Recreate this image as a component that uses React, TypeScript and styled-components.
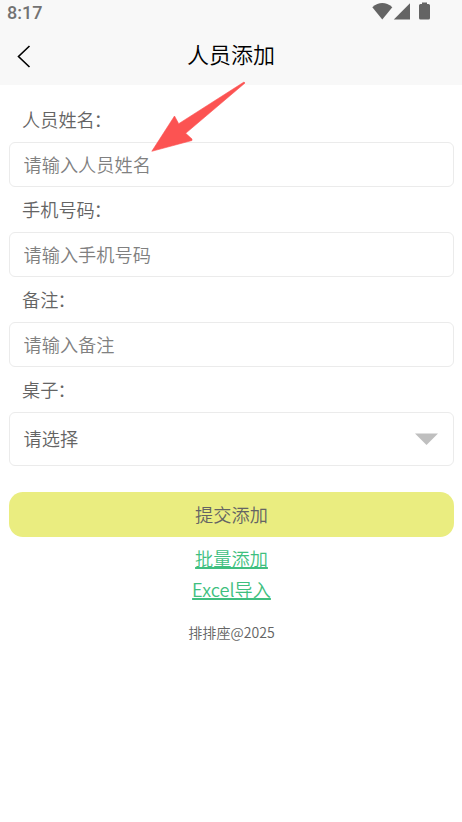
import React from 'react';
import styled, { createGlobalStyle } from 'styled-components';

const Global = createGlobalStyle`
  * { box-sizing: border-box; }
  body { margin: 0; background: #fff; font-family: "Noto Sans CJK SC", sans-serif; font-weight: 350; color: #646464; }
`;
const Page = styled.main`
  width: 462px; height: 822px; overflow: hidden; position: relative; background: #fff;
`;
const Header = styled.header`
  height: 85px; background: #f8f8f8;
`;
const StatusBar = styled.div`
  height: 26px; padding: 0 31px 0 7px; display: flex; justify-content: space-between;
  font: 500 18px/25px Roboto, sans-serif; color: #727272;
`;
const StatusIcons = styled.svg`
  display: block; width: 60px; height: 24px;
`;
const NavBar = styled.div`
  height: 59px; display: grid; grid-template-columns: 48px 1fr 48px; align-items: center;
`;
const BackButton = styled.button`
  border: 0; background: none; padding: 0 0 0 16px; height: 59px; display: flex; align-items: center;
`;
const Title = styled.h1`
  margin: 0; padding-bottom: 5px; text-align: center; font-size: 22px; line-height: 32px; font-weight: 350; color: #000;
`;
const Form = styled.form`
  padding: 12px 8px 0 9px;
`;
const Label = styled.label`
  display: block; height: 45px; line-height: 44px; padding-left: 13px; font-size: 18.2px;
`;
const Colon = styled.span`
  margin-left: -1px;
`;
const Input = styled.input`
  display: block; width: 100%; height: 45px; border: 1px solid #ebebeb; border-radius: 6px;
  padding: 0 13px 2px 13.5px; font: 350 18.2px "Noto Sans CJK SC", sans-serif; background: #fff;
  &::placeholder { color: #808080; opacity: 1; }
`;
const Select = styled.div`
  height: 54px; border: 1px solid #ebebeb; border-radius: 6px; padding: 0 15px 0 13.5px;
  display: flex; align-items: center; justify-content: space-between; font-size: 18.2px;
`;
const SelectValue = styled.span`
  padding-bottom: 2px;
`;
const Submit = styled.button`
  display: block; width: 100%; height: 45px; margin-top: 26px; padding: 0 6px 2px; border: 0; border-radius: 14px;
  background: #eaed80; color: #646464; font: 350 18.2px "Noto Sans CJK SC", sans-serif;
`;
const Links = styled.nav`
  display: flex; flex-direction: column; align-items: center; padding-top: 6px;
`;
const Link = styled.a`
  font-size: 18.2px; line-height: 31px; color: #3fbf7f; text-decoration: underline; text-decoration-thickness: 1.5px;
`;
const Footer = styled.footer`
  margin-top: 17px; text-align: center; font-size: 14.1px; line-height: 20px;
`;
const Pointer = styled.svg`
  position: absolute; left: 145px; top: 75px; pointer-events: none;
`;

const fields = [
  { label: '人员姓名', hint: '请输入人员姓名' },
  { label: '手机号码', hint: '请输入手机号码' },
  { label: '备注', hint: '请输入备注' },
];

export default function App() {
  return (
    <Page>
      <Global />
      <Header>
        <StatusBar>
          <span>8:17</span>
          <StatusIcons viewBox="371 0 60 24" fill="#646464">
            <path d="M372.3 7.2Q382.3-1 392.3 7.2L382.3 19.4Z" />
            <path d="M410 3.3V19.6H393.8Z" />
            <path d="M422 2.5h5v1.5h1.5q1.5 0 1.5 1.5v12.5q0 1.5-1.5 1.5h-8q-1.5 0-1.5-1.5V5.500q0-1.5 1.5-1.5h1.500Z" />
          </StatusIcons>
        </StatusBar>
        <NavBar>
          <BackButton aria-label="返回" type="button">
            <svg width="16" height="24" fill="none" stroke="#000" strokeWidth="1.6"><path d="M13.500 2 2.500 12.500 13.500 23" /></svg>
          </BackButton>
          <Title>人员添加</Title>
        </NavBar>
      </Header>
      <Form>
        {fields.map((f) => (
          <React.Fragment key={f.label}>
            <Label>{f.label}<Colon>：</Colon></Label>
            <Input placeholder={f.hint} />
          </React.Fragment>
        ))}
        <Label>桌子<Colon>：</Colon></Label>
        <Select>
          <SelectValue>请选择</SelectValue>
          <svg width="23" height="12"><path d="M0 0.500H23L11.5 12Z" fill="#bfbfbf" /></svg>
        </Select>
        <Submit type="button">提交添加</Submit>
        <Links>
          <Link>批量添加</Link>
          <Link>Excel导入</Link>
        </Links>
        <Footer>排排座@2025</Footer>
      </Form>
      <Pointer width="110" height="85" viewBox="145 75 110 85">
        <path d="M244 82 178.700 123.700 174.500 116 151.800 151.300 192 140.500V139L185.700 133.300 245 83Z" fill="#fc5352" stroke="#fc5352" strokeWidth=".6" strokeLinejoin="round" />
      </Pointer>
    </Page>
  );
}
